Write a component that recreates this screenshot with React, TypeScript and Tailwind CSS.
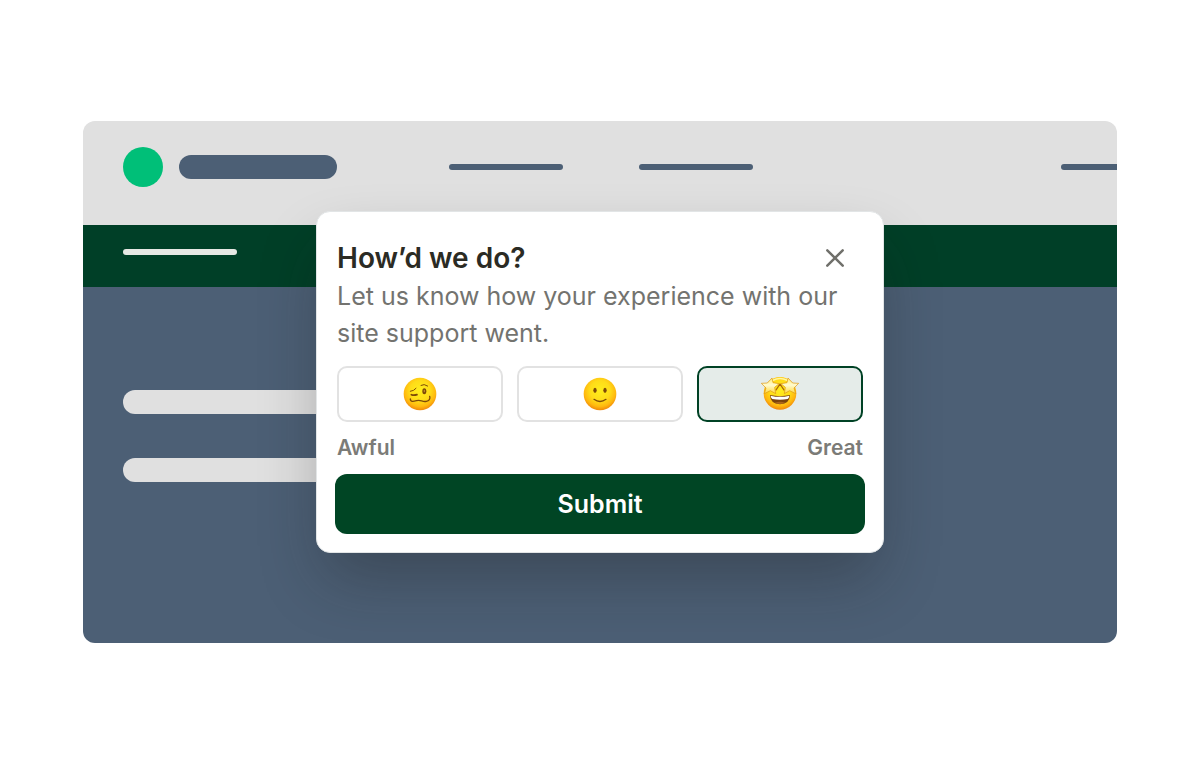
import { useState } from "react";
import type { ReactNode } from "react";

function FaceGradient({ id }: { id: string }) {
  return (
    <defs>
      <radialGradient id={id} cx="0.5" cy="0.4" r="0.62">
        <stop offset="0" stopColor="#ffee1c" />
        <stop offset="0.5" stopColor="#ffdc18" />
        <stop offset="0.78" stopColor="#ffb80f" />
        <stop offset="1" stopColor="#ee7f08" />
      </radialGradient>
      <linearGradient id={`${id}-star`} x1="0" y1="0" x2="0" y2="1">
        <stop offset="0" stopColor="#ffeb70" />
        <stop offset="0.45" stopColor="#fffbd0" />
        <stop offset="1" stopColor="#ffd93a" />
      </linearGradient>
    </defs>
  );
}

function WoozyFace() {
  return (
    <svg viewBox="0 0 108 108" className="size-9 overflow-visible" aria-hidden="true">
      <FaceGradient id="woozy" />
      <circle cx="54" cy="54" r="49" fill="url(#woozy)" />
      <g fill="none" stroke="#7d4a08" strokeWidth="3" strokeLinecap="round">
        <path d="M25 46Q36 45 42 37" />
        <path d="M28 56Q35 59 45 56" strokeWidth="5" />
        <path d="M57 28Q66 22 77 30" />
        <path d="M25 69C25 79 36 76 44 74C56 70 61 79 73 76C81 74 86 69 83 61" strokeWidth="4" />
      </g>
      <ellipse cx="67" cy="46" rx="6" ry="9" fill="#7d4a08" />
      <ellipse cx="67" cy="45" rx="2" ry="4" fill="#c08c30" />
    </svg>
  );
}

function SmilingFace() {
  return (
    <svg viewBox="0 0 108 108" className="size-9 overflow-visible" aria-hidden="true">
      <FaceGradient id="smiling" />
      <circle cx="54" cy="54" r="49" fill="url(#smiling)" />
      <ellipse cx="39" cy="43" rx="5" ry="8" fill="#7d4a08" />
      <ellipse cx="69" cy="43" rx="5" ry="8" fill="#7d4a08" />
      <path d="M36 70Q54 83 72 70" fill="none" stroke="#7d4a08" strokeWidth="4" strokeLinecap="round" />
    </svg>
  );
}

function StarStruckFace() {
  return (
    <svg viewBox="0 0 108 108" className="size-9 overflow-visible" aria-hidden="true">
      <FaceGradient id="struck" />
      <circle cx="54" cy="52" r="49" fill="url(#struck)" />
      <path d="M33 13Q54 2 75 13" fill="none" stroke="#fff6a0" strokeWidth="5" strokeLinecap="round" />
      <path d="M24 57Q54 64 84 57Q83 84 54 85Q25 84 24 57Z" fill="#7a430c" />
      <path d="M26 59Q54 66 82 59Q81 67 77 69Q54 74 31 69Q27 67 26 59Z" fill="#ffffff" />
      <path d="M38 80Q54 74 70 80Q54 88 38 80Z" fill="#a9641c" />
      <path d="M42 42L54 24L66 42" fill="none" stroke="#a9640c" strokeWidth="4" strokeLinecap="round" strokeLinejoin="round" />
      <g fill="url(#struck-star)" stroke="#dd9412" strokeWidth="2" strokeLinejoin="round">
        <path d="M30 6L33 20L51 23L38 34L41 53L25 44L7 53L12 36L-2 22L16 21Z" />
        <path d="M78 6L75 20L57 23L70 34L67 53L83 44L101 53L96 36L110 22L92 21Z" />
      </g>
    </svg>
  );
}

const ratings: { value: string; label: string; icon: ReactNode }[] = [
  { value: "awful", label: "Awful", icon: <WoozyFace /> },
  { value: "okay", label: "Okay", icon: <SmilingFace /> },
  { value: "great", label: "Great", icon: <StarStruckFace /> },
];

function SiteBackdrop() {
  return (
    <div className="overflow-hidden rounded-xl" aria-hidden="true">
      <div className="flex h-26 items-start bg-[#e0e0e0] pt-[26px] pl-10">
        <div className="flex h-10 w-full items-center">
          <div className="size-10 shrink-0 rounded-full bg-[#00bf78]" />
          <div className="ml-4 h-6 w-[158px] shrink-0 rounded-full bg-[#4c5f75]" />
          <div className="ml-28 h-1.5 w-[114px] shrink-0 rounded-full bg-[#4c5f75]" />
          <div className="ml-[76px] h-1.5 w-[114px] shrink-0 rounded-full bg-[#4c5f75]" />
          <div className="ml-auto h-1.5 w-14 shrink-0 rounded-l-full bg-[#4c5f75]" />
        </div>
      </div>
      <div className="h-[62px] bg-[#003f27] pt-6 pl-10">
        <div className="h-1.5 w-[114px] rounded-full bg-[#e6e8e4]" />
      </div>
      <div className="flex h-[356px] flex-col gap-11 bg-[#4c5f75] pt-[103px] pl-10">
        <div className="h-6 w-80 rounded-full bg-[#e0e0e0]" />
        <div className="h-6 w-80 rounded-full bg-[#e0e0e0]" />
      </div>
    </div>
  );
}

function FeedbackDialog() {
  const [rating, setRating] = useState("great");
  return (
    <form
      role="dialog"
      aria-labelledby="feedback-title"
      onSubmit={(event) => event.preventDefault()}
      className="w-full max-w-[568px] rounded-[14px] border border-[#e2e5e6] bg-white p-[18px] pt-7 shadow-[0_32px_64px_-8px_rgba(24,24,24,0.32)]"
    >
      <div className="px-0.5">
        <div className="flex items-center justify-between pr-4">
          <h1 id="feedback-title" className="text-[28px] leading-9 font-semibold text-[#2b2b24]">
            How’d we do?
          </h1>
          <button type="button" aria-label="Close" className="text-[#70706b]">
            <svg viewBox="0 0 24 24" className="size-6" fill="none" stroke="currentColor" strokeWidth="2.5" strokeLinecap="round">
              <path d="M4.3 4.3L19.7 19.7M19.7 4.3L4.3 19.7" />
            </svg>
          </button>
        </div>
        <p className="mt-0.5 text-[25px] leading-[37px] text-[#73736f]">
          Let us know how your experience with our site support went.
        </p>
        <fieldset aria-label="Rating" className="mt-3.5 grid grid-cols-3 gap-3.5">
          {ratings.map((item) => (
            <label
              key={item.value}
              className="flex h-14 cursor-pointer items-center justify-center rounded-[10px] border-2 border-[#e2e2e2] has-checked:border-[#004225] has-checked:bg-[#e5ece9]"
            >
              <input
                type="radio"
                name="rating"
                value={item.value}
                aria-label={item.label}
                checked={rating === item.value}
                onChange={() => setRating(item.value)}
                className="sr-only"
              />
              {item.icon}
            </label>
          ))}
        </fieldset>
        <div className="mt-3 flex justify-between text-[21px] leading-7 font-semibold text-[#7b7b77]">
          <span>Awful</span>
          <span>Great</span>
        </div>
      </div>
      <button type="submit" className="mt-3 h-15 w-full rounded-xl bg-[#004524] pt-0.5 text-[25px] font-semibold text-white">
        Submit
      </button>
    </form>
  );
}

export default function App() {
  return (
    <main className="flex min-h-screen items-center bg-white px-[83px] font-['Inter',sans-serif]">
      <div className="relative w-full">
        <SiteBackdrop />
        <div className="absolute inset-0 flex items-center justify-center overflow-hidden rounded-xl">
          <FeedbackDialog />
        </div>
      </div>
    </main>
  );
}
